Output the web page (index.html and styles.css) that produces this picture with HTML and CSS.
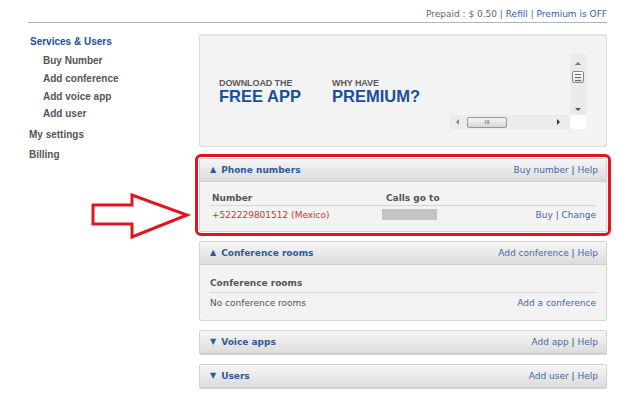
FILE: index.html
```html
<!DOCTYPE html>
<html>
<head>
<meta charset="utf-8">
<link rel="stylesheet" href="styles.css">
</head>
<body>
<div class="topbar">Prepaid : $ 0.50 | <a>Refill</a> | <a>Premium is OFF</a></div>
<div class="layout">
  <nav class="sidebar">
    <div class="nav-title">Services &amp; Users</div>
    <div class="nav-sub">Buy Number</div>
    <div class="nav-sub">Add conference</div>
    <div class="nav-sub">Add voice app</div>
    <div class="nav-sub">Add user</div>
    <div class="nav-top">My settings</div>
    <div class="nav-top">Billing</div>
  </nav>
  <main class="main">
    <div class="banner">
      <div class="promo promo-app">
        <div class="promo-small">DOWNLOAD THE</div>
        <div class="promo-big">FREE APP</div>
      </div>
      <div class="promo">
        <div class="promo-small">WHY HAVE</div>
        <div class="promo-big">PREMIUM?</div>
      </div>
      <div class="scroller">
        <div class="vbar">
          <span class="arr-up"></span>
          <span class="vthumb"><i></i><i></i><i></i></span>
          <span class="arr-down"></span>
        </div>
        <div class="hbar">
          <span class="arr-left"></span>
          <span class="hthumb">III</span>
          <span class="arr-right"></span>
        </div>
        <div class="corner"></div>
      </div>
    </div>

    <section class="panel highlight">
      <div class="panel-head"><span class="title"><span class="tri">▲</span>Phone numbers</span><span class="links"><a>Buy number</a> | <a>Help</a></span></div>
      <div class="panel-body phone">
        <div class="row thead"><span class="c1">Number</span><span class="c2">Calls go to</span><span class="c3"></span></div>
        <div class="row"><span class="c1 red">+522229801512 (Mexico)</span><span class="c2"><span class="blur"></span></span><span class="c3"><a>Buy</a> | <a>Change</a></span></div>
      </div>
    </section>

    <section class="panel">
      <div class="panel-head"><span class="title"><span class="tri">▲</span>Conference rooms</span><span class="links"><a>Add conference</a> | <a>Help</a></span></div>
      <div class="panel-body conf">
        <div class="row thead"><span class="c1">Conference rooms</span></div>
        <div class="row"><span class="c1">No conference rooms</span><span class="c3"><a>Add a conference</a></span></div>
      </div>
    </section>

    <section class="panel">
      <div class="panel-head"><span class="title"><span class="tri">▼</span>Voice apps</span><span class="links"><a>Add app</a> | <a>Help</a></span></div>
    </section>

    <section class="panel">
      <div class="panel-head"><span class="title"><span class="tri">▼</span>Users</span><span class="links"><a>Add user</a> | <a>Help</a></span></div>
    </section>
  </main>
</div>
<svg class="arrow" width="104" height="50" viewBox="0 0 104 50">
  <polygon points="2,12 41,12 41,2 96,22 41,44 41,31 2,31" fill="#fff" stroke="#e0161f" stroke-width="3" stroke-linejoin="miter"/>
</svg>
</body>
</html>
```

FILE: styles.css
```css
html, body {
  margin: 0;
  padding: 0;
  background: #fff;
}
body {
  width: 640px;
  height: 404px;
  overflow: hidden;
  position: relative;
  font-family: "DejaVu Sans", Verdana, sans-serif;
  color: #555;
}
a {
  color: #2f62a6;
  text-decoration: none;
}
.topbar {
  margin-left: 28px;
  width: 579px;
  height: 23px;
  border-bottom: 1px solid #b4b4b4;
  text-align: right;
  font-size: 9px;
  line-height: 29px;
  color: #666;
  box-sizing: border-box;
}
.layout {
  display: flex;
}
.sidebar {
  width: 199px;
  box-sizing: border-box;
  padding: 13px 0 0 29px;
  font-family: "Liberation Sans", Arial, sans-serif;
  font-weight: bold;
  font-size: 10px;
  color: #555;
}
.nav-title {
  color: #224f93;
  height: 19px;
  line-height: 12px;
  padding-left: 1px;
}
.nav-sub {
  padding-left: 14px;
  height: 17.8px;
  line-height: 12px;
}
.nav-top {
  height: 20px;
  line-height: 12px;
  margin-top: 3px;
}
.nav-top + .nav-top {
  margin-top: 0;
}
.main {
  width: 408px;
  padding-top: 11px;
}
.banner {
  height: 113px;
  box-sizing: border-box;
  background: #f3f3f3;
  border: 1px solid #dcdcdc;
  border-top: 2px solid #e2e2e2;
  border-radius: 3px;
  display: flex;
  align-items: flex-start;
  padding: 18px 20px 0 19px;
  margin-bottom: 11px;
}
.promo {
  margin-top: 24px;
  font-family: "Liberation Sans", Arial, sans-serif;
  font-weight: bold;
  white-space: nowrap;
}
.promo-app {
  width: 113px;
}
.promo-small {
  font-size: 9px;
  color: #5a5a5a;
  line-height: 10px;
  letter-spacing: -0.1px;
}
.promo-big {
  font-size: 16.5px;
  color: #1a4f9e;
  line-height: 16px;
}
.scroller {
  margin-left: auto;
  display: grid;
  grid-template-columns: 120px 16px;
  grid-template-rows: 61px 14px;
}
.vbar {
  grid-column: 2;
  grid-row: 1;
  background: #eaeaea;
  display: flex;
  flex-direction: column;
  align-items: center;
}
.arr-up {
  width: 0; height: 0;
  border-left: 3px solid transparent;
  border-right: 3px solid transparent;
  border-bottom: 3px solid #777;
  margin-top: 8px;
}
.vthumb {
  margin-top: 6px;
  width: 12px;
  height: 12px;
  box-sizing: border-box;
  border: 1px solid #888;
  border-radius: 2px;
  background: linear-gradient(#fff, #ddd);
  display: flex;
  flex-direction: column;
  justify-content: center;
  align-items: center;
  gap: 2px;
}
.vthumb i {
  display: block;
  width: 6px;
  height: 1px;
  background: #666;
}
.arr-down {
  width: 0; height: 0;
  border-left: 3px solid transparent;
  border-right: 3px solid transparent;
  border-top: 3px solid #555;
  margin-top: 25px;
}
.hbar {
  grid-column: 1;
  grid-row: 2;
  background: #ebebeb;
  display: flex;
  align-items: center;
}
.arr-left {
  width: 0; height: 0;
  border-top: 3px solid transparent;
  border-bottom: 3px solid transparent;
  border-right: 3px solid #888;
  margin-left: 6px;
}
.hthumb {
  margin-left: 8px;
  width: 40px;
  height: 11px;
  box-sizing: border-box;
  border: 1px solid #999;
  border-radius: 2px;
  background: linear-gradient(#f6f6f6, #d6d6d6);
  font-size: 6px;
  line-height: 9px;
  text-align: center;
  color: #555;
  font-family: "Liberation Sans", sans-serif;
}
.arr-right {
  width: 0; height: 0;
  border-top: 3px solid transparent;
  border-bottom: 3px solid transparent;
  border-left: 3px solid #333;
  margin-left: auto;
  margin-right: 10px;
}
.corner {
  grid-column: 2;
  grid-row: 2;
  background: #fff;
}
.panel {
  border: 1px solid #d4d4d4;
  border-radius: 2px;
  background: #f3f3f3;
  margin-bottom: 9px;
}
.panel.highlight {
  outline: 3px solid #e0161f;
  outline-offset: 1px;
}
.panel-head {
  height: 23px;
  box-sizing: border-box;
  display: flex;
  align-items: center;
  justify-content: space-between;
  padding: 0 8px 0 10px;
  background: linear-gradient(#f6f6f6, #dcdcdc);
  border-bottom: 1px solid #cfcfcf;
  font-size: 9px;
}
.panel-head .title {
  color: #2c5a9a;
  font-weight: bold;
}
.tri {
  font-size: 8px;
  margin-right: 5px;
  position: relative;
  top: -1px;
}
.links {
  color: #444;
  font-size: 9px;
}
.links a {
  color: #3d6aa8;
}
.panel-body {
  padding: 0 10px 0 10px;
  font-size: 9px;
}
.row {
  display: flex;
  align-items: center;
}
.thead {
  font-weight: bold;
  color: #555;
  border-bottom: 1px solid #d6d6d6;
}
.phone {
  padding-top: 9px;
  height: 49px;
  box-sizing: border-box;
}
.phone .thead {
  height: 14px;
  padding-left: 2px;
}
.phone .row + .row {
  height: 17px;
  padding-left: 2px;
}
.c1 { width: 174px; }
.c2 { width: 120px; }
.c3 { margin-left: auto; color: #555; }
.c3 a { color: #3d6aa8; }
.red { color: #d6322f; }
.blur {
  display: block;
  width: 55px;
  height: 11px;
  margin-left: -4px;
  background: #c3c3c3;
}
.conf {
  padding-top: 9px;
  height: 55px;
  box-sizing: border-box;
}
.conf .thead {
  height: 18px;
}
.conf .row + .row {
  height: 19px;
}
.conf .c1 { width: auto; }
.arrow {
  position: absolute;
  left: 91px;
  top: 193px;
}
```
